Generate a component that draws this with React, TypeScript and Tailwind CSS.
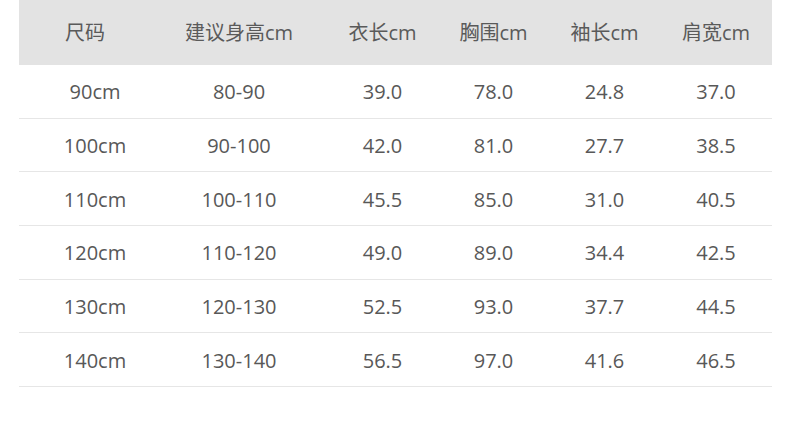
import React from "react";

const header = ["尺码", "建议身高cm", "衣长cm", "胸围cm", "袖长cm", "肩宽cm"];
const rows = [
  ["90cm", "80-90", "39.0", "78.0", "24.8", "37.0"],
  ["100cm", "90-100", "42.0", "81.0", "27.7", "38.5"],
  ["110cm", "100-110", "45.5", "85.0", "31.0", "40.5"],
  ["120cm", "110-120", "49.0", "89.0", "34.4", "42.5"],
  ["130cm", "120-130", "52.5", "93.0", "37.7", "44.5"],
  ["140cm", "130-140", "56.5", "97.0", "41.6", "46.5"],
];

const cols = "grid grid-cols-[132px_176px_111px_111px_111px_112px]";

export default function App() {
  return (
    <div
      className="w-[790px] h-[431px] bg-white text-[20px] text-[#585858]"
      style={{ fontFamily: '"Open Sans", "Noto Sans CJK SC", sans-serif' }}
    >
      <div className="ml-[19px] w-[753px]">
        <div className={`${cols} h-[65px] items-center bg-[#e3e3e3] text-[#5a5a5a]`}>
          {header.map((h, i) => (
            <div key={i} className="text-center leading-none">
              {h}
            </div>
          ))}
        </div>
        {rows.map((r, ri) => (
          <div
            key={ri}
            className={`${cols} h-[53.67px] items-center border-b border-[#e6e6e6]`}
          >
            {r.map((c, ci) => (
              <div
                key={ci}
                className={`text-center leading-none pt-[2px] ${ci === 0 ? "pl-[20px]" : ""}`}
              >
                {c}
              </div>
            ))}
          </div>
        ))}
      </div>
    </div>
  );
}
